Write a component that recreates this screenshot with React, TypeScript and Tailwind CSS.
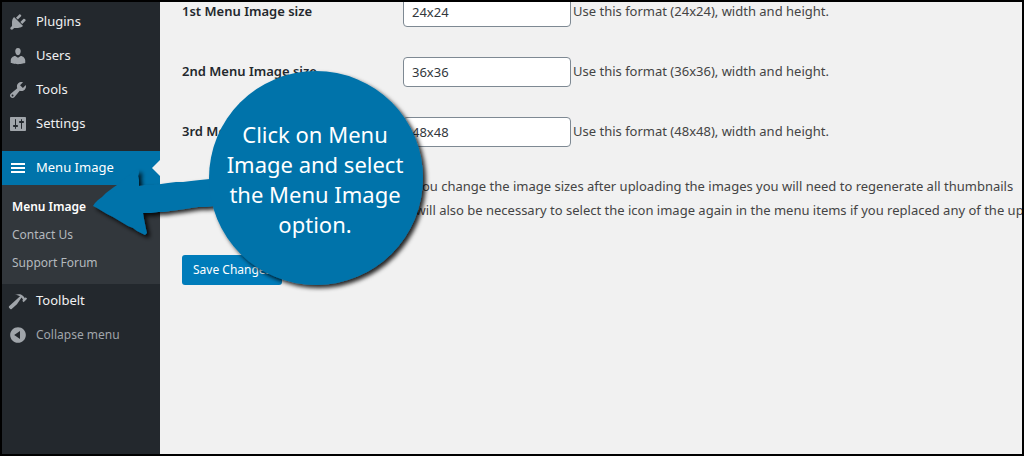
import React from 'react';

const icons = {
  plugins:
    'M13.11 4.36L9.87 7.6 8 5.73l3.24-3.24c.35-.34 1.05-.2 1.56.32.52.51.66 1.21.31 1.55zm-8 1.77l.91-1.12 9.01 9.01-1.19.84c-.71.71-2.63 1.16-3.82 1.16H6.14L4.9 17.26c-.59.59-1.54.59-2.12 0-.59-.58-.59-1.53 0-2.12l1.24-1.24v-3.88c0-1.13.4-3.19 1.09-3.89zm7.26 3.97l3.24-3.24c.34-.35 1.04-.21 1.55.31.52.51.66 1.21.31 1.55l-3.24 3.25z',
  users:
    'M10 9.25c-2.27 0-2.73-3.44-2.73-3.44C7 4.02 7.82 2 9.97 2c2.16 0 2.98 2.02 2.71 3.81 0 0-.41 3.44-2.68 3.44zm0 2.57L12.72 10c2.39 0 4.52 2.33 4.52 4.53v2.49s-3.65 1.13-7.24 1.13c-3.65 0-7.24-1.13-7.24-1.13v-2.49c0-2.25 1.94-4.48 4.47-4.48z',
  tools:
    'M16.68 9.77c-1.34 1.34-3.3 1.67-4.95.99l-5.41 6.52c-.99.99-2.59.99-3.58 0s-.99-2.59 0-3.57l6.52-5.42c-.68-1.65-.35-3.61.99-4.95 1.28-1.28 3.12-1.62 4.72-1.06l-2.89 2.89 2.82 2.82 2.86-2.87c.53 1.58.18 3.39-1.08 4.65zM3.81 16.21c.4.39 1.04.39 1.43 0 .4-.4.4-1.04 0-1.43-.39-.4-1.03-.4-1.43 0-.39.39-.39 1.03 0 1.43z',
  settings:
    'M18 16V4c0-.55-.45-1-1-1H3c-.55 0-1 .45-1 1v12c0 .55.45 1 1 1h14c.55 0 1-.45 1-1zM8 11h1c.55 0 1 .45 1 1s-.45 1-1 1H8v1.5c0 .28-.22.5-.5.5s-.5-.22-.5-.5V13H6c-.55 0-1-.45-1-1s.45-1 1-1h1V5.5c0-.28.22-.5.5-.5s.5.22.5.5V11zm5-2h-1c-.55 0-1-.45-1-1s.45-1 1-1h1V5.5c0-.28.22-.5.5-.5s.5.22.5.5V7h1c.55 0 1 .45 1 1s-.45 1-1 1h-1v5.5c0 .28-.22.5-.5.5s-.5-.22-.5-.5V9z',
  menu: 'M17 7V5H3v2h14zm0 4V9H3v2h14zm0 4v-2H3v2h14z',
  hammer:
    'M17.7 6.32l1.41 1.42-3.47 3.41-1.42-1.42.84-.82c-.32-.76-.81-1.57-1.51-2.31l-4.61 6.59-5.26 4.7c-.39.39-1.02.39-1.42 0l-1.2-1.21c-.39-.39-.39-1.02 0-1.41l10.97-9.92c-1.37-.86-3.21-1.46-5.67-1.48 2.7-.82 4.95-.93 6.58-.3 1.7.66 2.82 2.2 3.91 3.58z',
  collapse:
    'M10 2.16c4.33 0 7.84 3.51 7.84 7.84s-3.51 7.84-7.84 7.84S2.16 14.33 2.16 10 5.71 2.16 10 2.16zm2 11.72V6.12L6.18 9.97z',
};

type IconName = keyof typeof icons;

const Icon = ({ name, className }: { name: IconName; className: string }) => (
  <span className="flex w-8 shrink-0 justify-center">
    <svg viewBox="0 0 20 20" className={`size-5 ${className}`} fill="currentColor" aria-hidden="true">
      <path d={icons[name]} />
    </svg>
  </span>
);

const MenuItem = ({ icon, label }: { icon: IconName; label: string }) => (
  <a href="#" className="flex h-[34px] items-center gap-0.5 text-[#f0f0f1]">
    <Icon name={icon} className="text-[#a0a5aa]" />
    {label}
  </a>
);

const sizes = [
  { id: 'size-1', label: '1st Menu Image size', value: '24x24' },
  { id: 'size-2', label: '2nd Menu Image size', value: '36x36' },
  { id: 'size-3', label: '3rd Menu Image size', value: '48x48' },
];

const Sidebar = () => (
  <nav className="w-[158px] shrink-0 bg-[#23282d] pt-[3px] text-[13px]">
    <MenuItem icon="plugins" label="Plugins" />
    <MenuItem icon="users" label="Users" />
    <MenuItem icon="tools" label="Tools" />
    <MenuItem icon="settings" label="Settings" />

    {/* Current item */}
    <a href="#" className="relative mt-2.5 flex h-[34px] items-center gap-0.5 bg-[#0073aa] text-white">
      <Icon name="menu" className="text-white" />
      Menu Image
      <span className="absolute right-0 top-1/2 -translate-y-1/2 border-8 border-transparent border-r-[#f1f1f1]" />
    </a>
    <div className="flex flex-col bg-[#32373c] px-2.5 pb-[7px] pt-2 text-[12px] text-[#b4b9be]">
      <a href="#" className="flex h-7 items-center font-semibold text-white">Menu Image</a>
      <a href="#" className="flex h-7 items-center">Contact Us</a>
      <a href="#" className="flex h-7 items-center">Support Forum</a>
    </div>

    <MenuItem icon="hammer" label="Toolbelt" />
    <button type="button" className="flex h-[34px] w-full items-center gap-0.5 text-[12px] text-[#a0a5aa]">
      <Icon name="collapse" className="text-[#a0a5aa]" />
      Collapse menu
    </button>
  </nav>
);

const Callout = () => (
  <div className="absolute left-[86px] top-[66px] h-[222px] w-[340px]">
    <svg viewBox="0 0 340 222" className="size-full overflow-visible" aria-hidden="true">
      <defs>
        <filter id="shadow" x="-10%" y="-10%" width="120%" height="120%">
          <feDropShadow dx="3" dy="3" stdDeviation="2" floodColor="#000" floodOpacity="0.85" />
        </filter>
      </defs>
      <g fill="#0073aa" filter="url(#shadow)">
        <path d="M5 138L7 135L10 132L14 129L18 125L22 122L26 119L29 117L34 113L39 109L44 106L47 103L50 101L51 104L50 108L51 112L51 118L56 117L66 117L73 116L80 115L88 114L95 114L103 113L112 112L122 111L140 111L140 136L126 138L118 139L110 139L103 140L97 141L90 142L82 143L76 144L70 144L63 145L55 145L56 151L57 156L58 161L59 165L57 167L53 165L49 163L45 160L40 158L35 155L30 152L25 149L19 146L14 143L9 140Z" />
        <circle cx="228" cy="110" r="107" />
      </g>
    </svg>
    <p className="absolute right-1.5 top-[51px] w-[214px] text-center text-[22px] leading-[30px] text-white">
      Click on Menu
      <br />
      Image and select
      <br />
      the Menu Image
      <br />
      option.
    </p>
  </div>
);

const App = () => {
  return (
    <div className="relative flex min-h-screen overflow-hidden border-2 border-black bg-[#f1f1f1] font-['Noto_Sans','Open_Sans',sans-serif] text-[13px] text-[#444]">
      <Sidebar />

      <main className="min-w-0 flex-1 overflow-hidden pl-[22px]">
        <form className="-mt-5">
          {sizes.map((size) => (
            <div key={size.id} className="flex items-center py-[15px]">
              <label htmlFor={size.id} className="w-[221px] shrink-0 font-semibold text-[#23282d]">
                {size.label}
              </label>
              <input
                id={size.id}
                type="text"
                defaultValue={size.value}
                className="h-[30px] w-[168px] rounded border border-[#7e8993] bg-white px-2 text-[#32373c]"
              />
              <span className="whitespace-nowrap pl-0.5">
                Use this format ({size.value}), width and height.
              </span>
            </div>
          ))}
          <p className="ml-[221px] whitespace-nowrap pt-3 leading-6">
            If you change the image sizes after uploading the images you will need to regenerate all thumbnails
            <br />
            It will also be necessary to select the icon image again in the menu items if you replaced any of the uploaded images.
          </p>
          <button
            type="button"
            className="mt-[33px] h-[30px] rounded-[3px] bg-[#007cba] px-[11px] text-[12px] text-white"
          >
            Save Changes
          </button>
        </form>
      </main>

      <Callout />
    </div>
  );
};

export default App;
